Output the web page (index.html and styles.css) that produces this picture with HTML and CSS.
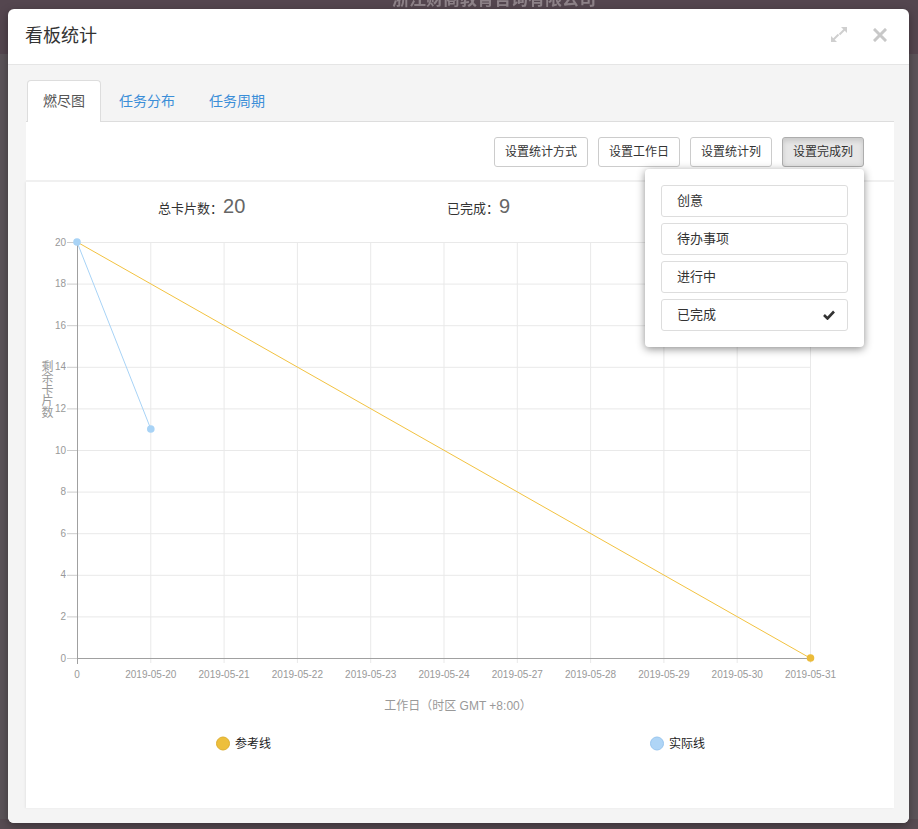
FILE: index.html
```html
<!DOCTYPE html>
<html lang="zh-CN">
<head>
<meta charset="utf-8">
<title>看板统计</title>
<link rel="stylesheet" href="styles.css">
</head>
<body>
<div class="page">
  <div class="page-title">浙江财商教育咨询有限公司</div>
</div>
<div class="modal">
  <div class="modal-header">
    <h4 class="modal-title">看板统计</h4>
    <div class="modal-tools">
      <svg class="tool-icon" width="18" height="18" viewBox="830 24 18 18">
        <polygon points="847,25 841,25 847,31" fill="#cfcfcf"/>
        <line x1="844.5" y1="27.5" x2="839.5" y2="32.5" stroke="#cfcfcf" stroke-width="2"/>
        <polygon points="831,40 831,34 837,40" fill="#cfcfcf"/>
        <line x1="833.5" y1="37.5" x2="838.5" y2="32.5" stroke="#cfcfcf" stroke-width="2"/>
      </svg>
      <svg class="tool-icon" width="14" height="14" viewBox="872 26 14 14">
        <path d="M874 28 L884 38 M884 28 L874 38" stroke="#c8c8c8" stroke-width="3" stroke-linecap="square"/>
      </svg>
    </div>
  </div>
  <div class="modal-body">
    <ul class="tabs">
      <li class="tab active">燃尽图</li>
      <li class="tab">任务分布</li>
      <li class="tab">任务周期</li>
    </ul>
    <div class="tab-content">
      <div class="toolbar">
        <div class="btn-group">
          <button class="btn">设置统计方式</button>
          <button class="btn">设置工作日</button>
          <button class="btn">设置统计列</button>
          <button class="btn pressed">设置完成列</button>
          <div class="dropdown">
            <div class="dd-item">创意</div>
            <div class="dd-item">待办事项</div>
            <div class="dd-item">进行中</div>
            <div class="dd-item">已完成
              <svg class="check" width="12" height="10" viewBox="0 0 12 10"><path d="M1 5 L4.5 8.5 L11 1.5" fill="none" stroke="#333" stroke-width="2.6"/></svg>
            </div>
          </div>
        </div>
      </div>
      <div class="chart-panel">
        <div class="stats">
          <div class="stat"><span class="stat-label">总卡片数：</span><span class="stat-num">20</span></div>
          <div class="stat"><span class="stat-label">已完成：</span><span class="stat-num">9</span></div>
          <div class="stat"><span class="stat-label">未完成：</span><span class="stat-num">11</span></div>
        </div>
        <svg class="chart" width="868" height="583" viewBox="26 225 868 583">
          <g stroke="#e9e9e9" stroke-width="1">
            <line x1="77" y1="242.5" x2="810" y2="242.5"/>
            <line x1="77" y1="284.1" x2="810" y2="284.1"/>
            <line x1="77" y1="325.7" x2="810" y2="325.7"/>
            <line x1="77" y1="367.3" x2="810" y2="367.3"/>
            <line x1="77" y1="408.9" x2="810" y2="408.9"/>
            <line x1="77" y1="450.5" x2="810" y2="450.5"/>
            <line x1="77" y1="492.1" x2="810" y2="492.1"/>
            <line x1="77" y1="533.7" x2="810" y2="533.7"/>
            <line x1="77" y1="575.3" x2="810" y2="575.3"/>
            <line x1="77" y1="616.9" x2="810" y2="616.9"/>
            <line x1="150.8" y1="242" x2="150.8" y2="663"/>
            <line x1="224.1" y1="242" x2="224.1" y2="663"/>
            <line x1="297.4" y1="242" x2="297.4" y2="663"/>
            <line x1="370.7" y1="242" x2="370.7" y2="663"/>
            <line x1="444" y1="242" x2="444" y2="663"/>
            <line x1="517.3" y1="242" x2="517.3" y2="663"/>
            <line x1="590.6" y1="242" x2="590.6" y2="663"/>
            <line x1="663.9" y1="242" x2="663.9" y2="663"/>
            <line x1="737.2" y1="242" x2="737.2" y2="663"/>
            <line x1="810.5" y1="242" x2="810.5" y2="663"/>
          </g>
          <g stroke="#cccccc" stroke-width="1">
            <line x1="67" y1="242.5" x2="77" y2="242.5"/>
            <line x1="67" y1="284.1" x2="77" y2="284.1"/>
            <line x1="67" y1="325.7" x2="77" y2="325.7"/>
            <line x1="67" y1="367.3" x2="77" y2="367.3"/>
            <line x1="67" y1="408.9" x2="77" y2="408.9"/>
            <line x1="67" y1="450.5" x2="77" y2="450.5"/>
            <line x1="67" y1="492.1" x2="77" y2="492.1"/>
            <line x1="67" y1="533.7" x2="77" y2="533.7"/>
            <line x1="67" y1="575.3" x2="77" y2="575.3"/>
            <line x1="67" y1="616.9" x2="77" y2="616.9"/>
            <line x1="67" y1="658.5" x2="77" y2="658.5"/>
          </g>
          <g stroke="#a0a0a0" stroke-width="1">
            <line x1="77.5" y1="242" x2="77.5" y2="664"/>
            <line x1="77" y1="658.5" x2="810" y2="658.5"/>
          </g>
          <g class="ylab" text-anchor="end">
            <text x="66" y="245.5">20</text>
            <text x="66" y="287.1">18</text>
            <text x="66" y="328.7">16</text>
            <text x="66" y="370.3">14</text>
            <text x="66" y="411.9">12</text>
            <text x="66" y="453.5">10</text>
            <text x="66" y="495.1">8</text>
            <text x="66" y="536.7">6</text>
            <text x="66" y="578.3">4</text>
            <text x="66" y="619.9">2</text>
            <text x="66" y="661.5">0</text>
          </g>
          <g class="xlab" text-anchor="middle">
            <text x="77" y="678">0</text>
            <text x="150.8" y="678">2019-05-20</text>
            <text x="224.1" y="678">2019-05-21</text>
            <text x="297.4" y="678">2019-05-22</text>
            <text x="370.7" y="678">2019-05-23</text>
            <text x="444" y="678">2019-05-24</text>
            <text x="517.3" y="678">2019-05-27</text>
            <text x="590.6" y="678">2019-05-28</text>
            <text x="663.9" y="678">2019-05-29</text>
            <text x="737.2" y="678">2019-05-30</text>
            <text x="810.5" y="678">2019-05-31</text>
          </g>
          <text class="ytitle" x="46" y="360">剩余卡片数</text>
          <text class="xtitle" x="458" y="710" text-anchor="middle">工作日（时区 GMT +8:00）</text>
          <line x1="77" y1="242" x2="810" y2="658" stroke="#f2c240" stroke-width="1"/>
          <circle cx="810.5" cy="658" r="3.8" fill="#ebbb3a"/>
          <line x1="77" y1="242" x2="150.8" y2="429" stroke="#a8d3f6" stroke-width="1"/>
          <circle cx="77" cy="242" r="3.8" fill="#a8d3f6"/>
          <circle cx="150.8" cy="429" r="3.8" fill="#a8d3f6"/>
          <circle cx="223" cy="743.5" r="6.5" fill="#edbf3c" stroke="#deae2e" stroke-width="1"/>
          <text class="legend" x="235" y="747.5">参考线</text>
          <circle cx="657" cy="743.5" r="6.5" fill="#afd5f6" stroke="#98c5ee" stroke-width="1"/>
          <text class="legend" x="669" y="747.5">实际线</text>
        </svg>
      </div>
    </div>
  </div>
</div>
</body>
</html>
```
FILE: styles.css
```css
html, body {
  margin: 0;
  padding: 0;
}
body {
  width: 918px;
  height: 829px;
  overflow: hidden;
  background: #574b52;
  font-family: "Liberation Sans", "Noto Sans CJK SC", sans-serif;
  position: relative;
}
.page {
  height: 829px;
  background: linear-gradient(#54464f 0, #54464f 64px, #5b5459 64px, #5b5459 100%);
}
.page-title {
  text-align: center;
  color: #8e8389;
  font-size: 17px;
  font-weight: bold;
  line-height: 20px;
  margin-top: -10px;
  padding-left: 70px;
  filter: blur(0.6px);
}
.modal {
  position: absolute;
  left: 8px;
  top: 9px;
  width: 901px;
  height: 814px;
  background: #fff;
  border-radius: 6px;
  overflow: hidden;
  box-shadow: 0 3px 10px rgba(0, 0, 0, 0.35);
  display: flex;
  flex-direction: column;
}
.modal-header {
  height: 55px;
  flex: none;
  border-bottom: 1px solid #e5e5e5;
  display: flex;
  align-items: center;
  justify-content: space-between;
  padding: 0 22px 0 17px;
}
.modal-title {
  margin: 0;
  font-size: 18px;
  font-weight: normal;
  color: #333;
  line-height: 24px;
  padding-bottom: 2px;
}
.modal-tools {
  display: flex;
  align-items: center;
  gap: 25px;
  padding-bottom: 3px;
}
.tool-icon {
  display: block;
}
.modal-body {
  flex: 1;
  background: #f4f4f4;
  padding: 15px 15px 15px 18px;
  display: flex;
  flex-direction: column;
}
.tabs {
  list-style: none;
  margin: 0;
  padding: 0 0 0 1px;
  display: flex;
  height: 41px;
  border-bottom: 1px solid #dddddd;
}
.tab {
  height: 41px;
  box-sizing: border-box;
  padding: 0 15px;
  margin-right: 2px;
  border: 1px solid transparent;
  border-bottom: none;
  border-radius: 4px 4px 0 0;
  font-size: 14px;
  line-height: 40px;
  color: #3b8ed8;
}
.tab.active {
  background: #fff;
  border-color: #dddddd;
  color: #555;
  height: 42px;
  margin-bottom: -1px;
}
.tab-content {
  flex: 1;
  background: #fff;
  display: flex;
  flex-direction: column;
}
.toolbar {
  height: 60px;
  flex: none;
  box-sizing: border-box;
  padding: 15px 30px 0 0;
  display: flex;
  justify-content: flex-end;
  border-bottom: 2px solid #f0f0f0;
  background: #fff;
  position: relative;
  z-index: 2;
}
.btn-group {
  position: relative;
  display: flex;
  height: 30px;
}
.btn {
  height: 30px;
  box-sizing: border-box;
  margin-left: 10px;
  padding: 0 10px;
  border: 1px solid #cccccc;
  border-radius: 3px;
  background: #fff;
  font-family: "Liberation Sans", "Noto Sans CJK SC", sans-serif;
  font-size: 12px;
  color: #333;
  line-height: 28px;
}
.btn.pressed {
  background: #e6e6e6;
  border-color: #adadad;
  box-shadow: inset 0 3px 5px rgba(0, 0, 0, 0.125);
}
.dropdown {
  position: absolute;
  right: 0;
  top: 32px;
  width: 219px;
  box-sizing: border-box;
  padding: 16px;
  background: #fff;
  border-radius: 4px;
  box-shadow: 0 2px 9px rgba(0, 0, 0, 0.45);
  display: flex;
  flex-direction: column;
  gap: 6px;
}
.dd-item {
  height: 32px;
  box-sizing: border-box;
  border: 1px solid #dddddd;
  border-radius: 3px;
  padding: 0 12px 0 15px;
  font-size: 13px;
  line-height: 28px;
  color: #333;
  display: flex;
  align-items: center;
  justify-content: space-between;
}
.check {
  display: block;
}
.chart-panel {
  flex: 1;
  background: #fff;
  box-shadow: -1px 0 2px rgba(0, 0, 0, 0.06);
}
.stats {
  display: grid;
  grid-template-columns: repeat(3, 289px);
  height: 43px;
  box-sizing: border-box;
  padding-top: 12px;
}
.stat {
  padding-left: 132px;
  line-height: 24px;
  white-space: nowrap;
}
.stat-label {
  font-size: 13px;
  color: #333;
}
.stat-num {
  font-size: 20px;
  color: #666;
}
.chart {
  display: block;
}
.ylab text, .xlab text {
  font-family: "Liberation Sans", sans-serif;
  font-size: 10px;
  fill: #999;
}
.ytitle, .xtitle {
  font-family: "Liberation Sans", "Noto Sans CJK SC", sans-serif;
  font-size: 12px;
  fill: #999;
}
.ytitle {
  writing-mode: vertical-rl;
  text-orientation: upright;
  letter-spacing: -0.5px;
}
.legend {
  font-family: "Liberation Sans", "Noto Sans CJK SC", sans-serif;
  font-size: 12px;
  fill: #222;
}
```
